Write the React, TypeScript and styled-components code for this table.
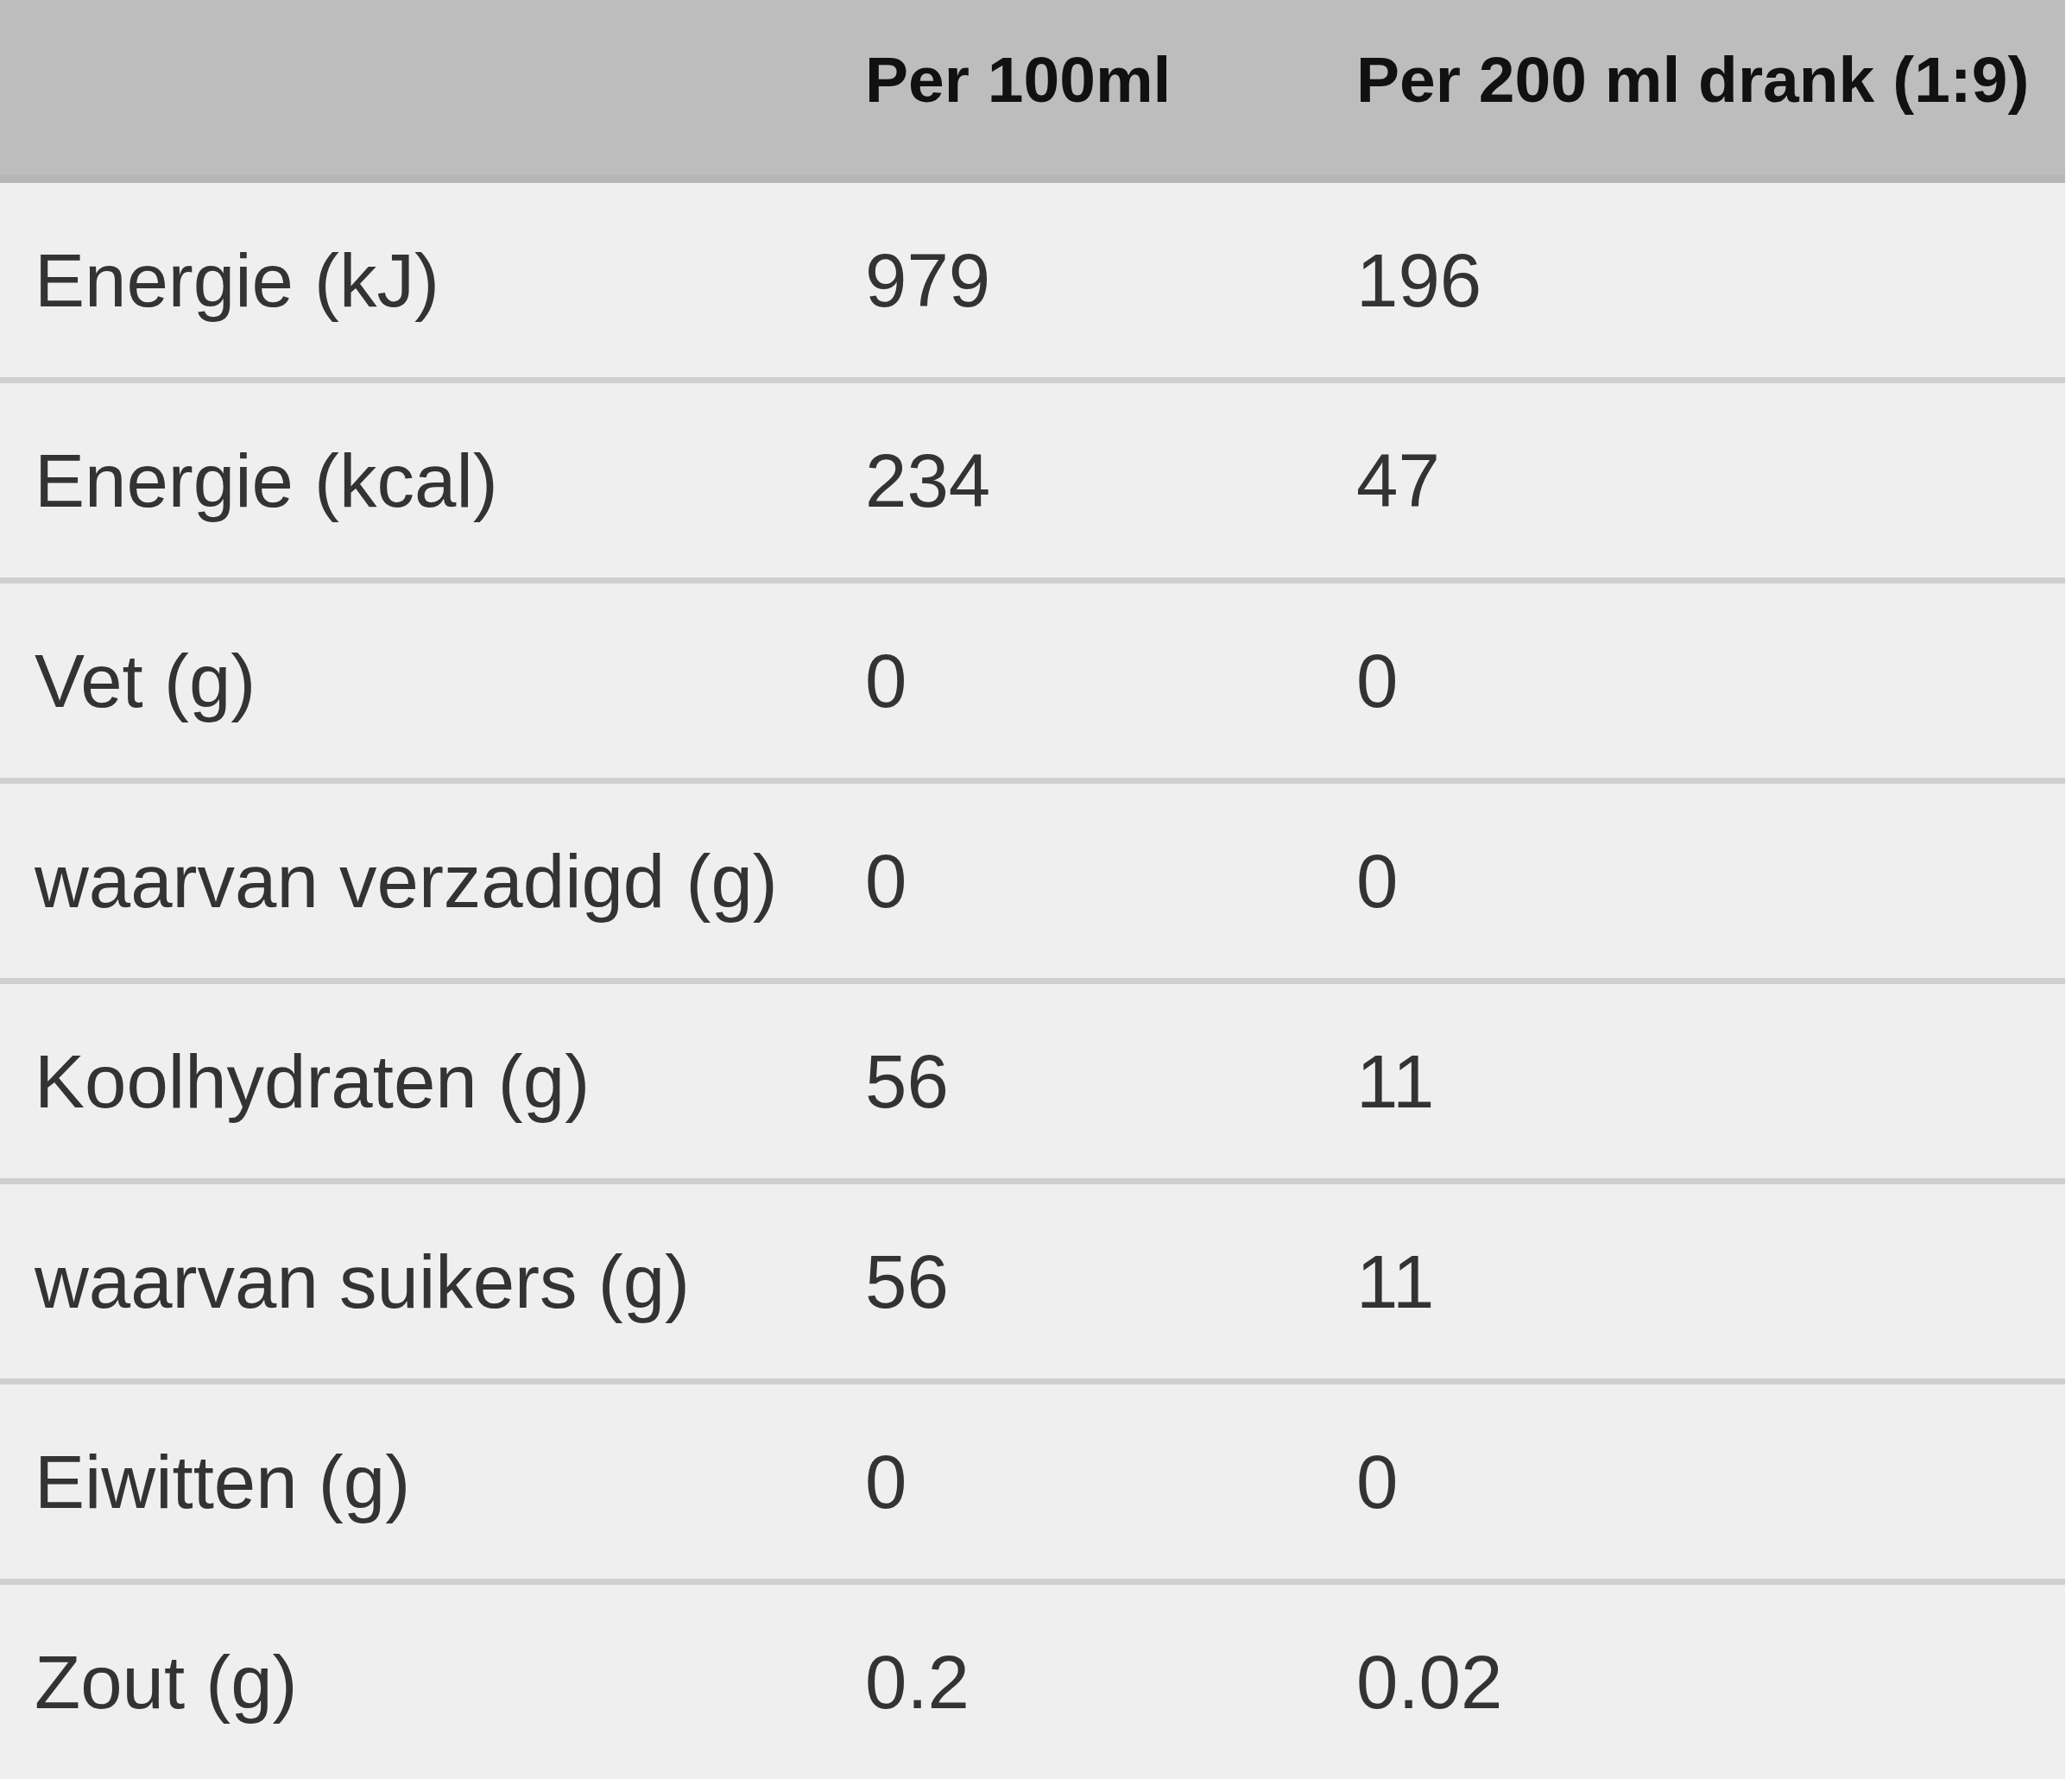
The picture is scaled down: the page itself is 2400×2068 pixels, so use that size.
import React from 'react';
import styled, { createGlobalStyle } from 'styled-components';

const GlobalStyle = createGlobalStyle`
  html, body {
    margin: 0;
    padding: 0;
    background: #ffffff;
  }
  body {
    font-family: "Liberation Sans", Arial, sans-serif;
  }
`;

const Table = styled.div`
  width: 2392px;
  display: flex;
  flex-direction: column;
  background: #efefef;
`;

const Row = styled.div<{ $head?: boolean }>`
  display: grid;
  grid-template-columns: 962px 569px 1fr;
  align-items: center;
  height: ${(p) => (p.$head ? '202px' : '225px')};
  background: ${(p) => (p.$head ? '#bdbdbd' : '#efefef')};
  border-bottom: ${(p) => (p.$head ? '10px solid #b7b7b7' : '7px solid #cfcfcf')};

  &:last-child {
    border-bottom: none;
  }
`;

const Cell = styled.div<{ $head?: boolean }>`
  padding-left: 40px;
  font-size: ${(p) => (p.$head ? '75px' : '87px')};
  font-weight: ${(p) => (p.$head ? 700 : 400)};
  color: ${(p) => (p.$head ? '#111111' : '#333333')};
  white-space: nowrap;
  line-height: 1;
  padding-bottom: ${(p) => (p.$head ? '18px' : '0')};
`;

interface Nutrient {
  label: string;
  per100: string;
  per200: string;
}

const nutrients: Nutrient[] = [
  { label: 'Energie (kJ)', per100: '979', per200: '196' },
  { label: 'Energie (kcal)', per100: '234', per200: '47' },
  { label: 'Vet (g)', per100: '0', per200: '0' },
  { label: 'waarvan verzadigd (g)', per100: '0', per200: '0' },
  { label: 'Koolhydraten (g)', per100: '56', per200: '11' },
  { label: 'waarvan suikers (g)', per100: '56', per200: '11' },
  { label: 'Eiwitten (g)', per100: '0', per200: '0' },
  { label: 'Zout (g)', per100: '0.2', per200: '0.02' },
];

function App() {
  return (
    <>
      <GlobalStyle />
      <Table>
        <Row $head>
          <Cell $head />
          <Cell $head>Per 100ml</Cell>
          <Cell $head>Per 200 ml drank (1:9)</Cell>
        </Row>
        {nutrients.map((n) => (
          <Row key={n.label}>
            <Cell>{n.label}</Cell>
            <Cell>{n.per100}</Cell>
            <Cell>{n.per200}</Cell>
          </Row>
        ))}
      </Table>
    </>
  );
}

export default App;
